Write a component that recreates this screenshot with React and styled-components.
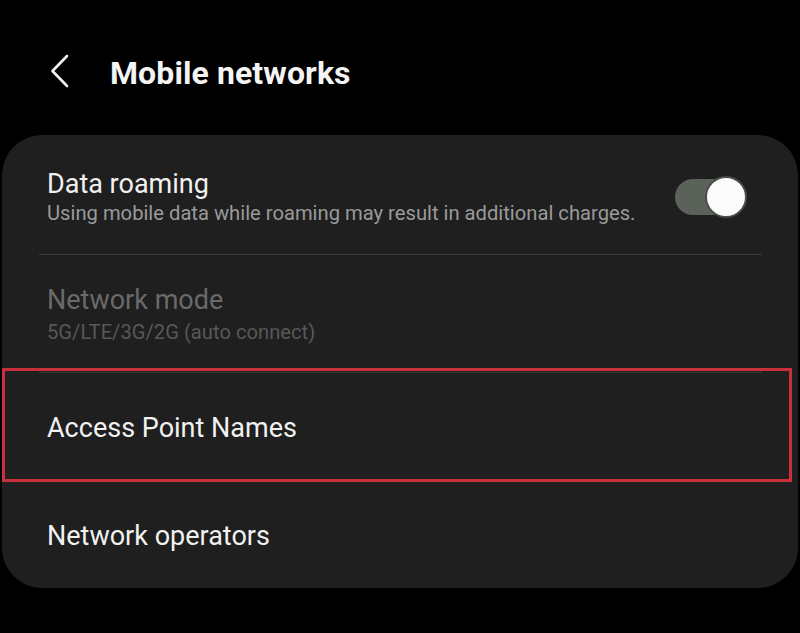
import React from "react";
import styled, { createGlobalStyle } from "styled-components";

const Global = createGlobalStyle`
  html, body { margin: 0; padding: 0; background: #000; }
  body { font-family: Roboto, "Noto Sans", "Liberation Sans", sans-serif; -webkit-font-smoothing: antialiased; }
  * { box-sizing: border-box; }
`;

const Screen = styled.div`
  width: 800px;
  height: 633px;
  background: #000;
  display: flex;
  flex-direction: column;
  overflow: hidden;
`;

const Header = styled.header`
  height: 135px;
  display: flex;
  align-items: flex-start;
  padding: 54px 0 0 50px;
  gap: 40px;
`;

const BackButton = styled.button`
  width: 20px;
  height: 36px;
  padding: 0;
  border: 0;
  background: none;
  display: flex;
  color: #f2f2f2;
`;

const Title = styled.h1`
  margin: 0;
  font-size: 32px;
  line-height: 38px;
  font-weight: 700;
  color: #f4f4f4;
  letter-spacing: 0.1px;
`;

const Card = styled.section`
  margin-left: 2px;
  width: 796px;
  height: 453px;
  background: #1e1f1e;
  border-radius: 40px;
  display: flex;
  flex-direction: column;
`;

const Row = styled.div`
  position: relative;
  display: flex;
  align-items: center;
  padding: ${(p) => p.$pt}px 55px ${(p) => p.$pb}px 45px;
`;

const TextBlock = styled.div`
  flex: 1;
  display: flex;
  flex-direction: column;
  gap: ${(p) => p.$gap || 0}px;
`;

const RowTitle = styled.div`
  font-size: 27px;
  line-height: 32px;
  color: ${(p) => (p.$disabled ? "#6a6a6a" : "#f1f1f1")};
`;

const RowSub = styled.div`
  font-size: 20.2px;
  line-height: 24px;
  color: ${(p) => (p.$disabled ? "#585858" : "#9a9a9a")};
`;

const Divider = styled.div`
  height: 1px;
  margin: 0 36px 0 37px;
  background: #3a3b3a;
`;

const Highlight = styled.div`
  position: absolute;
  left: 0;
  right: 6px;
  top: -5px;
  bottom: 0;
  border: 3px solid #c9303b;
  pointer-events: none;
`;

const Track = styled.div`
  position: relative;
  width: 68px;
  height: 36px;
  border-radius: 18px;
  background: #5b6259;
  flex-shrink: 0;
`;

const Thumb = styled.div`
  position: absolute;
  right: -4px;
  top: -3px;
  width: 42px;
  height: 42px;
  border-radius: 50%;
  background: #fbfbfb;
  border: 2px solid #4a4c4a;
`;

function Chevron() {
  return (
    <svg width="20" height="36" viewBox="0 0 20 36" fill="none">
      <path d="M17 2 L2.5 17 L17 32" stroke="currentColor" strokeWidth="2.6" strokeLinecap="round" strokeLinejoin="round" />
    </svg>
  );
}

export default function App() {
  return (
    <>
      <Global />
      <Screen>
        <Header>
          <BackButton aria-label="Back">
            <Chevron />
          </BackButton>
          <Title>Mobile networks</Title>
        </Header>
        <Card>
          <Row $pt={33} $pb={29}>
            <TextBlock $gap={1}>
              <RowTitle>Data roaming</RowTitle>
              <RowSub>Using mobile data while roaming may result in additional charges.</RowSub>
            </TextBlock>
            <Track>
              <Thumb />
            </Track>
          </Row>
          <Divider />
          <Row $pt={29} $pb={28}>
            <TextBlock $gap={4}>
              <RowTitle $disabled>Network mode</RowTitle>
              <RowSub $disabled>5G/LTE/3G/2G (auto connect)</RowSub>
            </TextBlock>
          </Row>
          <Divider />
          <Row $pt={39} $pb={38}>
            <TextBlock>
              <RowTitle>Access Point Names</RowTitle>
            </TextBlock>
            <Highlight />
          </Row>
          <Row $pt={38} $pb={36}>
            <TextBlock>
              <RowTitle>Network operators</RowTitle>
            </TextBlock>
          </Row>
        </Card>
      </Screen>
    </>
  );
}
